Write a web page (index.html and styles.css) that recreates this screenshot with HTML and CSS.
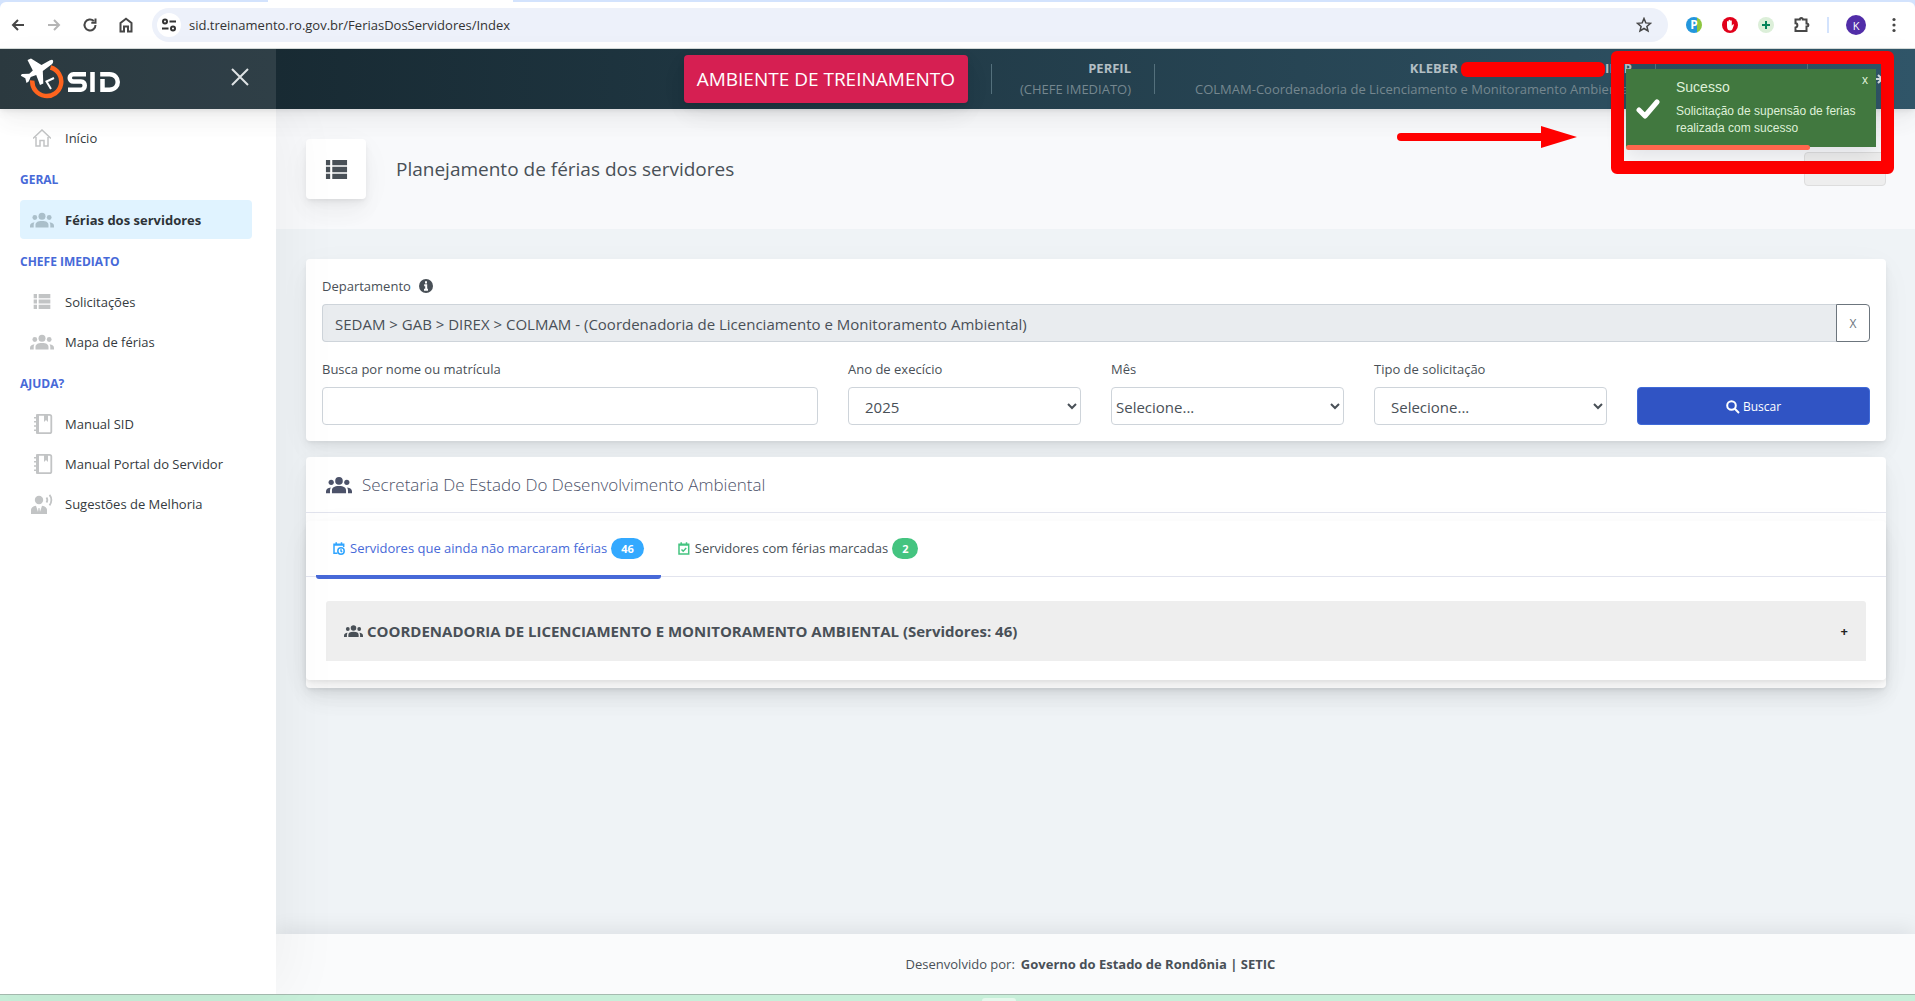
FILE: index.html
```html
<!DOCTYPE html>
<html lang="pt-BR">
<head>
<meta charset="utf-8">
<title>SID - Férias dos servidores</title>
<link rel="stylesheet" href="styles.css">
</head>
<body>
<svg class="defs" aria-hidden="true">
  <symbol id="i-group" viewBox="0 0 24 16"><circle cx="12" cy="4.200" r="3.500"/><circle cx="4.800" cy="5.500" r="2.400"/><circle cx="19.200" cy="5.500" r="2.400"/><path d="M5.500 15.500v-2.500c0-2.500 2-4 6.500-4s6.500 1.500 6.500 4v2.500zM0 15.500v-1.500c0-2 1.500-3.300 4.500-3.700-.6.900-.8 1.800-.8 2.700v2.500zM24 15.500v-1.500c0-2-1.500-3.300-4.500-3.700.6.900.8 1.800.8 2.700v2.500z"/></symbol>
  <symbol id="i-list" viewBox="0 0 20 18"><path d="M0 0h4v5H0zM6 0h14v5H6zM0 6.500h4v5H0zM6 6.500h14v5H6zM0 13h4v5H0zM6 13h14v5H6z"/></symbol>
  <symbol id="i-book" viewBox="0 0 20 22"><path d="M5 1.800h11.500a1.800 1.800 0 0 1 1.800 1.800v14.800a1.800 1.800 0 0 1-1.800 1.800H5z" fill="none" stroke="currentColor" stroke-width="1.800"/><path d="M11 2h4v7l-2-2-2 2zM3 1.200h2.800v19.600H3zM1 4h3v1.500H1zM1 8h3v1.500H1zM1 12.300h3v1.500H1zM1 16.500h3V18H1z"/></symbol>
</svg>

<header class="browser">
  <div class="browser-tabs"></div>
  <div class="browser-bar">
    <nav class="browser-nav">
      <button class="icon-btn" aria-label="Voltar"><svg viewBox="0 0 16 16"><path d="M14 8H3M8 3 3 8l5 5"/></svg></button>
      <button class="icon-btn faded" aria-label="Avançar"><svg viewBox="0 0 16 16"><path d="M2 8h11M8 3l5 5-5 5"/></svg></button>
      <button class="icon-btn" aria-label="Recarregar"><svg viewBox="0 0 16 16"><path d="M13.500 8a5.500 5.500 0 1 1-1.700-4M13.500 1.500v4.200H9.300"/></svg></button>
      <button class="icon-btn" aria-label="Página inicial"><svg viewBox="0 0 16 16"><path d="M2.500 14.500V6L8 1.800 13.500 6v8.500H10V9.500H6v5z"/></svg></button>
    </nav>
    <div class="address">
      <button class="site-info" aria-label="Informações do site"><svg viewBox="0 0 16 16"><circle cx="4" cy="4.500" r="2"/><path d="M8.500 4.500H15M1 11.500h6.500"/><circle cx="12" cy="11.500" r="2"/></svg></button>
      <input class="url" aria-label="Endereço" value="sid.treinamento.ro.gov.br/FeriasDosServidores/Index">
      <button class="icon-btn thin" aria-label="Favoritar"><svg viewBox="0 0 16 16"><path d="m8 1.500 1.800 4.400 4.700.4-3.600 3.100 1.100 4.600L8 11.500 4 14l1.100-4.600L1.500 6.300l4.700-.4z"/></svg></button>
    </div>
    <div class="extensions">
      <button class="ext ext-p" aria-label="Extensão P">P</button>
      <button class="ext ext-stop" aria-label="Bloqueador"><svg viewBox="0 0 16 16"><path d="M5 9V4.500a.9.900 0 0 1 1.600 0V3.200a.9.900 0 0 1 1.600 0v.6a.9.900 0 0 1 1.600 0v5l1-1.300c.8-.5 1.300 0 1 .7L10.500 12c-.6 1-1.200 1.500-2.500 1.500C6 13.500 5 12 5 9z"/></svg></button>
      <button class="ext ext-plus" aria-label="Extensão adicionar"><svg viewBox="0 0 16 16"><path d="M8 4v8M4 8h8"/></svg></button>
      <button class="icon-btn" aria-label="Extensões"><svg viewBox="0 0 16 16"><path d="M1.500 2.500h4.300c0-2 3-2 3 0h3.700v4c2.500 0 2.500 3 0 3v4.500h-11V10.500c2.500-.4 2.500-4 0-4.200z"/></svg></button>
      <span class="ext-sep"></span>
      <button class="avatar" aria-label="Perfil">K</button>
      <button class="icon-btn dots" aria-label="Menu"><svg viewBox="0 0 16 16"><circle cx="8" cy="2.500" r="1.600"/><circle cx="8" cy="8" r="1.600"/><circle cx="8" cy="13.500" r="1.600"/></svg></button>
    </div>
  </div>
</header>

<div class="app">
  <header class="topbar">
    <div class="brand">
      <a class="logo" href="#" aria-label="SID">
        <svg class="logo-mark" viewBox="0 0 44 42"><path d="M30.500 9.500A14.500 14.500 0 1 1 12.300 22.500" fill="none" stroke="#ff641e" stroke-width="4.500"/><path d="M33 2.500c-.5-1.200-1.500-1-3-.2L21.500 7 11 .5 7.500 2l5.300 10.500-3.500 3.300-7.500.2L.8 17.800l4.500 2.400L6.500 25l2.200-1.500 2-4.500 5.500-2L20 27l3.300-1.500-.5-12.500 8.700-6.500c1.300-1 2-2.500 1.500-4z" fill="#fff"/><path d="m34 20-7.500 3.500L31 31" fill="none" stroke="#fff" stroke-width="2"/></svg>
        <svg class="logo-word" viewBox="0 0 54 20"><g fill="none" stroke="#fff" stroke-width="4.500"><path d="M19 2.300H6.500C1.500 2.300 1.500 9.500 6.500 9.500h7.500c5 0 5 8.200 0 8.200H1M25.500 0v20M35.500 7v10.700h7c11 0 11-15.400 0-15.400h-9.300"/></g></svg>
      </a>
      <button class="close" aria-label="Fechar menu"><svg viewBox="0 0 18 18"><path d="m1 1 16 16M17 1 1 17"/></svg></button>
    </div>
    <div class="topbar-main">
      <button class="env">AMBIENTE DE TREINAMENTO</button>
      <div class="user-block profile"><b>PERFIL</b><span>(CHEFE IMEDIATO)</span></div>
      <div class="user-block user-name"><b>KLEBER <i class="redacted"></i>II&nbsp;&nbsp; P</b><span>COLMAM-Coordenadoria de Licenciamento e Monitoramento Ambiental</span></div>
      <div class="user-block slot"></div>
      <div class="user-block exit"><svg viewBox="0 0 18 18"><path d="M11 2a7 7 0 1 0 0 14M7 9h10M13 5l4 4-4 4"/></svg></div>
    </div>
  </header>

  <div class="body">
    <aside class="sidebar">
      <nav>
        <a class="item" href="#"><svg class="g18" viewBox="0 0 18 18"><path d="M0 9.500 9 1l9 8.500M3 8v9h4v-5.500h4V17h4V8" fill="none" stroke="currentColor" stroke-width="1.500"/></svg>Início</a>
        <h2>GERAL</h2>
        <a class="item active" href="#"><svg class="g24"><use href="#i-group"/></svg>Férias dos servidores</a>
        <h2>CHEFE IMEDIATO</h2>
        <a class="item" href="#"><svg class="g18 short"><use href="#i-list"/></svg>Solicitações</a>
        <a class="item" href="#"><svg class="g24"><use href="#i-group"/></svg>Mapa de férias</a>
        <h2>AJUDA?</h2>
        <a class="item" href="#"><svg class="g20"><use href="#i-book"/></svg>Manual SID</a>
        <a class="item" href="#"><svg class="g20"><use href="#i-book"/></svg>Manual Portal do Servidor</a>
        <a class="item" href="#"><svg class="g22" viewBox="0 0 22 20"><circle cx="8" cy="6" r="4.200"/><path d="M0 20v-4c0-2.500 1.800-3.800 5-4.300L7 18l.5-4h1l.5 4 2-6.300c3.200.5 5 1.800 5 4.300v4z"/><path d="M15.500 3.500c1 1.500 1 3.500 0 5M18.500.8c2.500 3 2.500 7.500 0 10.500" fill="none" stroke="currentColor" stroke-width="1.800"/></svg>Sugestões de Melhoria</a>
      </nav>
    </aside>

    <main class="main">
      <section class="title">
        <div class="title-icon"><svg><use href="#i-list"/></svg></div>
        <h1>Planejamento de férias dos servidores</h1>
        <button class="title-action" aria-label="Voltar"></button>
      </section>

      <div class="content">
        <form class="card filter">
          <div class="field">
            <label for="dep">Departamento <svg class="info" viewBox="0 0 14 14"><circle cx="7" cy="7" r="7"/><path d="M7 2.200v2.400M5.200 6.300h2v4M5 10.700h4" fill="none" stroke="#fff" stroke-width="2"/></svg></label>
            <div class="input-group">
              <input id="dep" readonly value="SEDAM &gt; GAB &gt; DIREX &gt; COLMAM - (Coordenadoria de Licenciamento e Monitoramento Ambiental)">
              <button type="button" class="clear">X</button>
            </div>
          </div>
          <div class="row">
            <div class="field wide"><label for="q">Busca por nome ou matrícula</label><input id="q"></div>
            <div class="field"><label for="ano">Ano de execício</label><select id="ano"><option>2025</option></select></div>
            <div class="field"><label for="mes">Mês</label><select id="mes" class="tight"><option>Selecione...</option></select></div>
            <div class="field"><label for="tipo">Tipo de solicitação</label><select id="tipo"><option>Selecione...</option></select></div>
            <button type="button" class="search"><svg viewBox="0 0 14 14"><circle cx="5.500" cy="5.500" r="4.300"/><path d="m8.800 8.800 4.200 4.200"/></svg>Buscar</button>
          </div>
        </form>

        <section class="card result">
          <h2 class="result-head"><svg><use href="#i-group"/></svg>Secretaria De Estado Do Desenvolvimento Ambiental</h2>
          <div class="panel">
            <div class="tabs">
              <button class="tab on"><svg viewBox="0 0 12 13"><path d="M10.700 5V2.200H1v9h3.500M3.200.2v2M8.500.2v2M1 3h9.700"/><circle cx="8" cy="9" r="3.200"/><path d="M8 7.200V9l1.200.8"/></svg>Servidores que ainda não marcaram férias<span class="badge">46</span></button>
              <button class="tab"><svg class="ok" viewBox="0 0 12 13"><path d="M1 2.200h9.700v9.800H1zM3.200.2v2M8.500.2v2M1 3h9.700M3.500 7.500l1.700 1.700 3-3.200"/></svg>Servidores com férias marcadas<span class="badge green">2</span></button>
            </div>
            <div class="panel-body">
              <button class="accordion"><svg><use href="#i-group"/></svg>COORDENADORIA DE LICENCIAMENTO E MONITORAMENTO AMBIENTAL (Servidores: 46)<span class="plus">+</span></button>
            </div>
          </div>
        </section>
      </div>

      <footer class="footer"><span>Desenvolvido por:</span><b>Governo do Estado de Rondônia | SETIC</b></footer>
    </main>
  </div>
</div>
<div class="desktop-strip"><i></i></div>

<svg class="arrow" viewBox="0 0 180 22"><path d="M4 11h142" stroke="#f00" stroke-width="8" stroke-linecap="round"/><path d="M144 0v22l36-11z" fill="#f00"/></svg>
<div class="highlight"></div>
<div class="toast" role="status">
  <svg viewBox="0 0 24 20"><path d="m3 11 6 6L21 3"/></svg>
  <div class="toast-text"><strong>Sucesso</strong><p>Solicitação de supensão de ferias realizada com sucesso</p></div>
  <button class="toast-close" aria-label="Fechar">x</button>
  <div class="toast-progress"></div>
</div>
</body>
</html>
```
FILE: styles.css
```css
* { box-sizing: border-box; }
html, body { margin: 0; }
body {
  min-height: 100vh;
  display: flex;
  flex-direction: column;
  position: relative;
  font-family: "Open Sans", "Noto Sans", sans-serif;
  font-size: 13px;
  color: #495057;
  --shadow: 0 7px 35px rgba(4,9,20,.03), 0 15px 22px rgba(4,9,20,.03), 0 4px 8px rgba(4,9,20,.05), 0 2px 3px rgba(4,9,20,.03);
}
button, input, select { font: inherit; color: inherit; margin: 0; }
button { border: 0; padding: 0; background: none; }
h1, h2, p { margin: 0; font-weight: 400; }
a { color: inherit; text-decoration: none; }
svg { display: block; fill: currentColor; flex: none; }
.defs { position: absolute; width: 0; height: 0; }

/* browser chrome */
.browser { background: #d3e3fd; border-bottom: 1px solid #d5dbd9; }
.browser-tabs { width: 245px; height: 2px; margin-left: 268px; background: #fff; }
.browser-bar { display: flex; align-items: center; height: 46px; background: #fff; border-radius: 6px 6px 0 0; padding: 0 13px 0 10px; }
.browser-nav { display: flex; gap: 20px; margin-right: 18px; }
.icon-btn { width: 16px; height: 16px; color: #474747; }
.icon-btn svg { width: 16px; height: 16px; fill: none; stroke: currentColor; stroke-width: 2; }
.icon-btn.thin svg { stroke-width: 1.5; }
.icon-btn.faded { color: #b5b5b5; }
.icon-btn.dots svg { fill: currentColor; stroke: none; }
.address { flex: 1; display: flex; align-items: center; height: 34px; padding: 0 16px 0 5px; background: #edf1fa; border-radius: 17px; }
.site-info { width: 24px; height: 24px; padding: 4px; border-radius: 50%; background: #fff; }
.site-info svg { fill: none; stroke: #333; stroke-width: 2; }
.url { flex: 1; border: 0; background: none; padding: 0 8px; color: #333; }
.extensions { display: flex; align-items: center; gap: 20px; margin-left: 18px; }
.ext { width: 16px; height: 16px; border-radius: 8px; font-size: 12px; line-height: 16px; }
.ext-p { background: linear-gradient(90deg, #2396dc 70%, #8dc63f 70%); color: #fff; font-weight: 700; }
.ext-stop { background: #e1001a; color: #fff; }
.ext-plus { background: #dcefd9; }
.ext-plus svg { stroke: #07835a; stroke-width: 2; }
.ext-sep { width: 2px; height: 16px; background: #d3e3fd; margin: 0 -3px; }
.avatar { width: 20px; height: 20px; border-radius: 50%; background: #512da8; color: #fff; font-size: 11px; }

/* app header */
.app { flex: 1; display: flex; flex-direction: column; background: #eff3f6; }
.topbar { display: flex; height: 60px; background: linear-gradient(90deg, #14232a, #305568); box-shadow: var(--shadow); position: relative; z-index: 2; }
.brand { width: 276px; display: flex; align-items: center; justify-content: space-between; padding: 0 27px 0 20px; background: rgba(255,255,255,.1); }
.logo { display: flex; align-items: center; }
.logo-mark { width: 44px; height: 42px; }
.logo-word { width: 54px; height: 20px; margin: 6px 0 0 3px; }
.close svg { width: 18px; height: 18px; stroke: #dfe3e5; stroke-width: 2; margin-top: -4px; }
.topbar-main { flex: 1; display: flex; align-items: center; justify-content: flex-end; padding-right: 14px; }
.env { height: 48px; padding: 0 13px; margin-right: 23px; border-radius: 4px; background: #d61f52; color: #fff; font-size: 19px; box-shadow: var(--shadow); }
.user-block { height: 30px; padding: 0 23px; border-left: 1px solid #54707c; display: flex; flex-direction: column; justify-content: center; text-align: right; line-height: 21px; color: #75878f; white-space: nowrap; }
.user-block b { color: #b3bfc4; }
.profile { width: 163px; }
.user-name { width: 501px; }
.redacted { display: inline-block; width: 144px; height: 15px; border-radius: 6px; background: #f00; vertical-align: middle; }
.slot { width: 152px; }
.exit { width: 94px; align-items: flex-end; padding: 0 18px 0 0; }
.exit svg { width: 18px; height: 18px; fill: none; stroke: #d5dde1; stroke-width: 2; }

/* sidebar */
.body { flex: 1; display: flex; }
.sidebar { width: 276px; padding: 8px 24px 0 20px; background: #fff; box-shadow: 7px 0 60px rgba(0,0,0,.05); position: relative; z-index: 1; }
.sidebar h2 { height: 41px; line-height: 43px; font-size: 12px; font-weight: 700; color: #4769d8; }
.item { display: flex; align-items: center; height: 39px; margin: 1px 0; padding-left: 45px; border-radius: 4px; color: #343a40; }
.item svg { color: #c2c4c5; margin-right: 12px; }
.item.active { background: #e0f3ff; font-weight: 700; color: #2d3338; }
.item.active svg { color: #aabfca; }
.g18 { width: 18px; height: 18px; }
.g18.short { height: 15px; }
.g20 { width: 20px; height: 22px; margin-left: -32px; }
.g22 { width: 22px; height: 20px; margin-left: -34px; }
.g24 { width: 24px; height: 16px; margin-left: -35px; }
.item .g18 { margin-left: -32px; margin-right: 14px; }
.item .g24 { margin-right: 11px; }

/* page */
.main { flex: 1; min-width: 0; display: flex; flex-direction: column; }
.title { display: flex; align-items: center; height: 120px; padding: 0 29px 0 30px; background: #f8f9fb; }
.title-icon { width: 60px; height: 60px; border-radius: 4px; background: #fff; box-shadow: var(--shadow); display: grid; place-items: center; margin-right: 30px; }
.title-icon svg { width: 23px; height: 19px; }
.title h1 { flex: 1; font-size: 19px; }
.title-action { width: 82px; height: 34px; border: 1px solid #ddd; border-radius: 4px; background: #eee; }
.content { flex: 1; padding: 30px 29px 30px 30px; }
.card { background: #fff; border-radius: 4px; box-shadow: var(--shadow); margin-bottom: 16px; }
.filter { padding: 16px; }
.field label { display: flex; align-items: center; gap: 8px; height: 21px; margin-bottom: 8px; }
.info { width: 14px; height: 14px; }
.input-group { display: flex; margin-bottom: 16px; }
.field input, .field select { width: 100%; height: 38px; border: 1px solid #ced4da; border-radius: 4px; background: #fff; padding: 1px 12px 0; font-size: 15px; }
.field select.tight { padding: 1px 0 0; }
.input-group input[readonly] { flex: 1; width: auto; min-width: 0; background: #e9ecef; border-right: 0; border-radius: 4px 0 0 4px; }
.clear { width: 34px; border: 1px solid #6c757d; border-radius: 0 4px 4px 0; font-size: 12px; color: #6c757d; }
.row { display: grid; grid-template-columns: repeat(12, minmax(0, 1fr)); gap: 30px; align-items: end; }
.row > * { grid-column: span 2; }
.row > .wide { grid-column: span 4; }
.search { height: 38px; padding-top: 1px; border: 1px solid #3f6ad8; border-radius: 4px; background: #3054c4; color: #fff; font-size: 12px; display: flex; align-items: center; justify-content: center; gap: 3px; }
.search svg { width: 14px; height: 14px; fill: none; stroke: #fff; stroke-width: 2; }
.result { margin: 0; padding-bottom: 8px; }
.result-head { display: flex; align-items: center; gap: 10px; height: 56px; padding: 0 20px; border-bottom: 1px solid #e2e4ee; font-size: 17px; font-weight: 300; color: #4c5269; }
.result-head svg { width: 26px; height: 18px; }
.panel { margin-top: 8px; border-radius: 4px; box-shadow: var(--shadow); }
.tabs { display: flex; padding: 0 10px; height: 56px; border-bottom: 1px solid #e2e4ee; }
.tab { display: flex; align-items: center; height: 58px; padding: 0 17px; border-bottom: 4px solid transparent; border-radius: 3px; }
.tab.on { color: #4769d8; border-bottom-color: #4769d8; }
.tab svg { width: 12px; height: 13px; margin-right: 5px; fill: none; stroke: #30a5ff; stroke-width: 1.5; }
.tab svg.ok { stroke: #44c480; }
.badge { height: 21px; padding: 0 10px; margin-left: 4px; border-radius: 11px; background: #33a9ff; color: #fff; font-size: 11px; font-weight: 700; line-height: 21px; }
.badge.green { background: #44c480; }
.panel-body { padding: 24px 20px 19px; }
.accordion { width: 100%; height: 60px; display: flex; align-items: center; padding: 0 18px; background: #eee; border-radius: 3px 3px 0 0; font-size: 15px; font-weight: 700; }
.accordion svg { width: 19px; height: 14px; margin-right: 4px; }
.plus { margin-left: auto; font-size: 13px; color: #222; }
.footer { display: flex; align-items: center; justify-content: center; gap: 6px; height: 60px; padding-right: 10px; background: #fafbfc; box-shadow: 0 -5px 20px rgba(4,9,20,.08); }
.desktop-strip { height: 7px; padding-left: 82px; border-top: 1px solid #a5bbb0; background: #c7efd9; }
.desktop-strip i { display: block; width: 34px; height: 3px; margin: 3px auto 0; background: #e4f8ec; border-radius: 3px 3px 0 0; }

/* notes and toast over the page */
.arrow { position: absolute; z-index: 4; top: 126px; right: 338px; width: 180px; height: 22px; }
.highlight { position: absolute; z-index: 4; top: 51px; right: 21px; width: 283px; height: 123px; border: 13px solid #f00; border-radius: 6px; }
.toast { position: absolute; z-index: 5; top: 69px; right: 39px; width: 250px; height: 78px; display: flex; padding: 10px 14px 0 10px; background: #41783f; color: #dff0d8; font-family: "Liberation Sans", Arial, sans-serif; font-size: 12px; line-height: 17px; box-shadow: 0 8px 20px rgba(4,9,20,.1); }
.toast > svg { width: 24px; height: 20px; margin: 20px 16px 0 0; fill: none; stroke: #fff; stroke-width: 5; stroke-linecap: round; stroke-linejoin: round; }
.toast strong { display: block; font-size: 14px; font-weight: 400; margin-bottom: 7px; }
.toast-close { position: absolute; top: 3px; right: 8px; }
.toast-progress { position: absolute; left: 0; bottom: -3px; width: 184px; height: 5px; border-radius: 3px; background: #ff674d; }
```
